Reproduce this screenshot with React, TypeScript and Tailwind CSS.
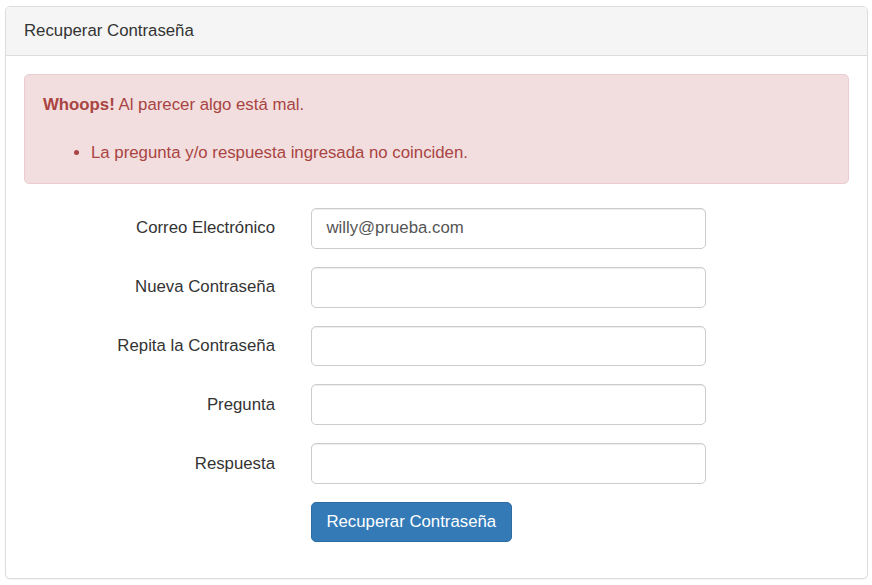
import React from "react";

const fields = [
  { label: "Correo Electrónico", value: "willy@prueba.com" },
  { label: "Nueva Contraseña", value: "" },
  { label: "Repita la Contraseña", value: "" },
  { label: "Pregunta", value: "" },
  { label: "Respuesta", value: "" },
];

export default function App() {
  return (
    <div
      className="min-h-[585px] bg-white pt-[6px] pl-[5px] pr-[4px] text-[16.8px] leading-[24px] text-[#333]"
      style={{ fontFamily: '"Liberation Sans", Arial, sans-serif' }}
    >
      <div className="w-[863px] rounded-[5px] border border-[#ddd] bg-white shadow-[0_1px_1px_rgba(0,0,0,0.05)]">
        <div className="rounded-t-[4px] border-b border-[#ddd] bg-[#f5f5f5] px-[18px] py-[12px] text-[#333]">
          Recuperar Contraseña
        </div>
        <div className="p-[18px]">
          <div className="mb-[24px] rounded-[5px] border border-[#ebccd1] bg-[#f2dede] p-[18px] text-[#a94442]">
            <div>
              <strong className="font-bold">Whoops!</strong> Al parecer algo está mal.
            </div>
            <div className="h-[24px]" />
            <ul className="list-disc pl-[48px]">
              <li>La pregunta y/o respuesta ingresada no coinciden.</li>
            </ul>
          </div>
          <form onSubmit={(e) => e.preventDefault()}>
            {fields.map((f) => (
              <div key={f.label} className="mb-[18px] flex">
                <label className="w-[251px] pt-[8.4px] text-right">{f.label}</label>
                <div className="ml-[36px] w-[395px]">
                  <input
                    type="text"
                    defaultValue={f.value}
                    className="block h-[40.8px] w-full rounded-[5px] border border-[#ccc] bg-white px-[14.4px] py-[7.2px] text-[16.8px] leading-[24px] text-[#555] shadow-[inset_0_1px_1px_rgba(0,0,0,0.075)] outline-none"
                  />
                </div>
              </div>
            ))}
            <div className="mb-[18px] flex">
              <div className="ml-[287px]">
                <button
                  type="submit"
                  className="rounded-[5px] border border-[#2e6da4] bg-[#337ab7] px-[14.4px] py-[7.2px] text-[16.8px] leading-[24px] text-white"
                >
                  Recuperar Contraseña
                </button>
              </div>
            </div>
          </form>
        </div>
      </div>
    </div>
  );
}
